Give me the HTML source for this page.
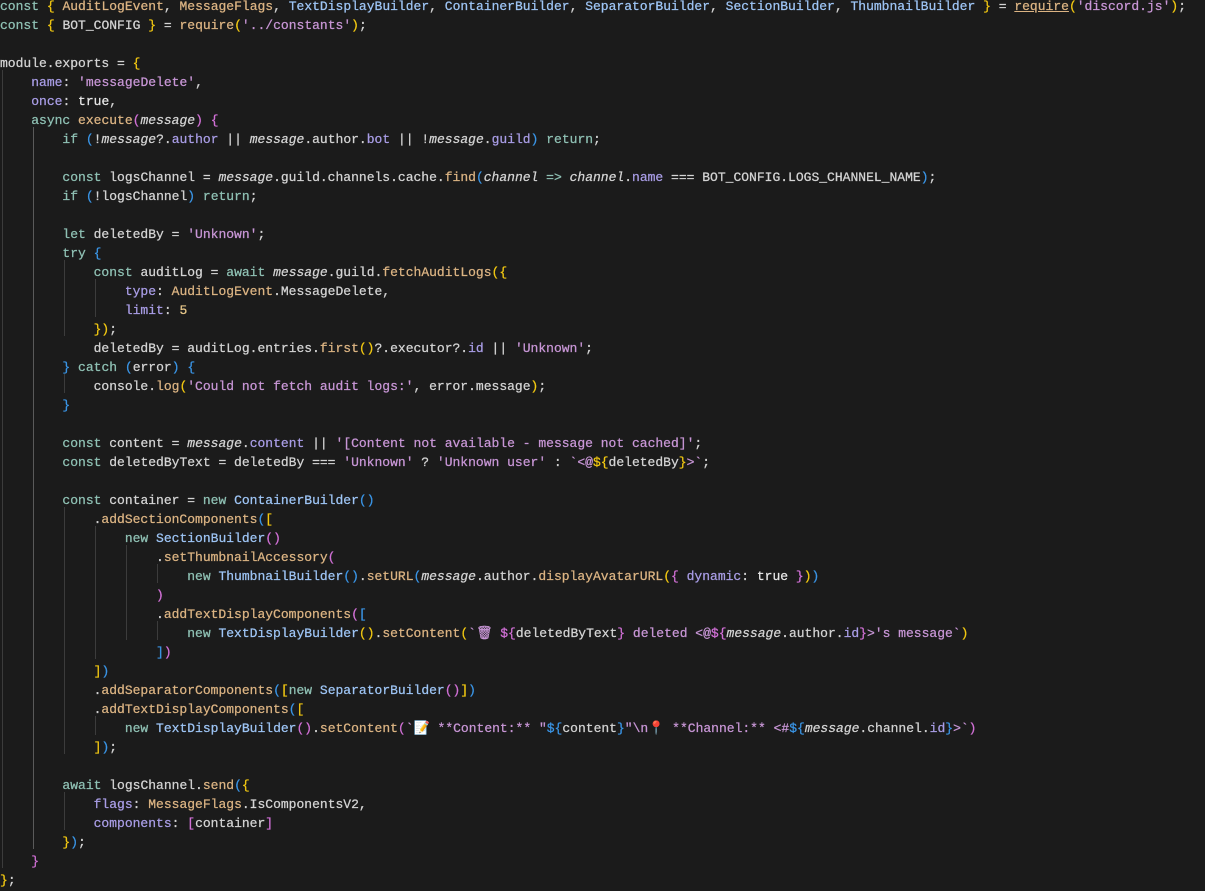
<!DOCTYPE html><html><head><meta charset="utf-8"><style>
html,body{margin:0;background:#1b1b1b;width:1205px;height:891px;overflow:hidden;position:relative}
pre{position:relative;margin:-3px 0 0 0;font-family:"Liberation Mono","DejaVu Sans Mono",monospace;font-size:13px;line-height:19px;color:#d4d4d4;white-space:pre;-webkit-text-stroke:0.25px}
.k{color:#8fc1b4}.p{color:#a99de6}.s{color:#c896d6}.f{color:#dcb483}.c{color:#9ec5f5}.i{font-style:italic}
.b1{color:#f2c811}.b2{color:#d170d6}.b3{color:#3a95e6}.n{color:#e8c88a}.w{color:#e8e8e8}
.g{position:absolute;width:1px;background:#3c3c3c}
</style></head><body>
<div class="g" style="left:2px;top:73px;height:798px"></div>
<div class="g" style="left:33px;top:130px;height:722px;background:#5a5a5a"></div>
<div class="g" style="left:64px;top:263px;height:76px"></div>
<div class="g" style="left:64px;top:377px;height:19px"></div>
<div class="g" style="left:64px;top:510px;height:247px"></div>
<div class="g" style="left:64px;top:795px;height:38px"></div>
<div class="g" style="left:95px;top:282px;height:38px"></div>
<div class="g" style="left:95px;top:529px;height:133px"></div>
<div class="g" style="left:95px;top:719px;height:19px"></div>
<div class="g" style="left:126px;top:548px;height:95px"></div>
<div class="g" style="left:157px;top:567px;height:19px"></div>
<div class="g" style="left:157px;top:624px;height:19px"></div>
<pre><span class="k">const</span> <span class="b1">{</span> <span class="f">AuditLogEvent</span>, <span class="f">MessageFlags</span>, <span class="c">TextDisplayBuilder</span>, <span class="c">ContainerBuilder</span>, <span class="c">SeparatorBuilder</span>, <span class="c">SectionBuilder</span>, <span class="c">ThumbnailBuilder</span> <span class="b1">}</span> = <span class="f" style="text-decoration:underline">require</span><span class="b1">(</span><span class="s">'discord.js'</span><span class="b1">)</span>;
<span class="k">const</span> <span class="b1">{</span> BOT_CONFIG <span class="b1">}</span> = <span class="f">require</span><span class="b1">(</span><span class="s">'../constants'</span><span class="b1">)</span>;

module.exports = <span class="b1">{</span>
    <span class="p">name</span>: <span class="s">'messageDelete'</span>,
    <span class="p">once</span>: <span class="w">true</span>,
    <span class="k">async</span> <span class="f">execute</span><span class="b2">(</span><span class="i">message</span><span class="b2">)</span> <span class="b2">{</span>
        <span class="k">if</span> <span class="b3">(</span>!<span class="i">message</span>?.<span class="p">author</span> || <span class="i">message</span>.author.<span class="p">bot</span> || !<span class="i">message</span>.<span class="p">guild</span><span class="b3">)</span> <span class="k">return</span>;

        <span class="k">const</span> logsChannel = <span class="i">message</span>.guild.channels.cache.<span class="f">find</span><span class="b3">(</span><span class="i">channel</span> <span class="k">=&gt;</span> <span class="i">channel</span>.<span class="p">name</span> === BOT_CONFIG.LOGS_CHANNEL_NAME<span class="b3">)</span>;
        <span class="k">if</span> <span class="b3">(</span>!logsChannel<span class="b3">)</span> <span class="k">return</span>;

        <span class="k">let</span> deletedBy = <span class="s">'Unknown'</span>;
        <span class="k">try</span> <span class="b3">{</span>
            <span class="k">const</span> auditLog = <span class="k">await</span> <span class="i">message</span>.guild.<span class="f">fetchAuditLogs</span><span class="b1">({</span>
                <span class="p">type</span>: <span class="f">AuditLogEvent</span>.MessageDelete,
                <span class="p">limit</span>: <span class="n">5</span>
            <span class="b1">})</span>;
            deletedBy = auditLog.entries.<span class="f">first</span><span class="b1">()</span>?.executor?.<span class="p">id</span> || <span class="s">'Unknown'</span>;
        <span class="b3">}</span> <span class="k">catch</span> <span class="b3">(</span>error<span class="b3">)</span> <span class="b3">{</span>
            console.<span class="f">log</span><span class="b1">(</span><span class="s">'Could not fetch audit logs:'</span>, error.message<span class="b1">)</span>;
        <span class="b3">}</span>

        <span class="k">const</span> content = <span class="i">message</span>.<span class="p">content</span> || <span class="s">'[Content not available - message not cached]'</span>;
        <span class="k">const</span> deletedByText = deletedBy === <span class="s">'Unknown'</span> ? <span class="s">'Unknown user'</span> : <span class="s">`&lt;@</span><span class="b1">${</span>deletedBy<span class="b1">}</span><span class="s">&gt;`</span>;

        <span class="k">const</span> container = <span class="k">new</span> <span class="c">ContainerBuilder</span><span class="b3">()</span>
            .<span class="f">addSectionComponents</span><span class="b3">(</span><span class="b1">[</span>
                <span class="k">new</span> <span class="c">SectionBuilder</span><span class="b2">()</span>
                    .<span class="f">setThumbnailAccessory</span><span class="b2">(</span>
                        <span class="k">new</span> <span class="c">ThumbnailBuilder</span><span class="b3">()</span>.<span class="f">setURL</span><span class="b3">(</span><span class="i">message</span>.author.<span class="f">displayAvatarURL</span><span class="b1">(</span><span class="b2">{</span> <span class="p">dynamic</span>: <span class="w">true</span> <span class="b2">}</span><span class="b1">)</span><span class="b3">)</span>
                    <span class="b2">)</span>
                    .<span class="f">addTextDisplayComponents</span><span class="b2">(</span><span class="b3">[</span>
                        <span class="k">new</span> <span class="c">TextDisplayBuilder</span><span class="b1">()</span>.<span class="f">setContent</span><span class="b1">(</span><span class="s">`🗑 </span><span class="b2">${</span>deletedByText<span class="b2">}</span><span class="s"> deleted &lt;@</span><span class="b2">${</span><span class="i">message</span>.author.<span class="p">id</span><span class="b2">}</span><span class="s">&gt;'s message`</span><span class="b1">)</span>
                    <span class="b3">]</span><span class="b2">)</span>
            <span class="b1">]</span><span class="b3">)</span>
            .<span class="f">addSeparatorComponents</span><span class="b3">(</span><span class="b1">[</span><span class="k">new</span> <span class="c">SeparatorBuilder</span><span class="b2">()</span><span class="b1">]</span><span class="b3">)</span>
            .<span class="f">addTextDisplayComponents</span><span class="b3">(</span><span class="b1">[</span>
                <span class="k">new</span> <span class="c">TextDisplayBuilder</span><span class="b2">()</span>.<span class="f">setContent</span><span class="b2">(</span><span class="s">`📝 **Content:** "</span><span class="b3">${</span>content<span class="b3">}</span><span class="s">"\n📍 **Channel:** &lt;#</span><span class="b3">${</span><span class="i">message</span>.channel.<span class="p">id</span><span class="b3">}</span><span class="s">&gt;`</span><span class="b2">)</span>
            <span class="b1">]</span><span class="b3">)</span>;

        <span class="k">await</span> logsChannel.<span class="f">send</span><span class="b3">(</span><span class="b1">{</span>
            <span class="p">flags</span>: <span class="f">MessageFlags</span>.IsComponentsV2,
            <span class="p">components</span>: <span class="b2">[</span>container<span class="b2">]</span>
        <span class="b1">}</span><span class="b3">)</span>;
    <span class="b2">}</span>
<span class="b1">}</span>;</pre></body></html>
